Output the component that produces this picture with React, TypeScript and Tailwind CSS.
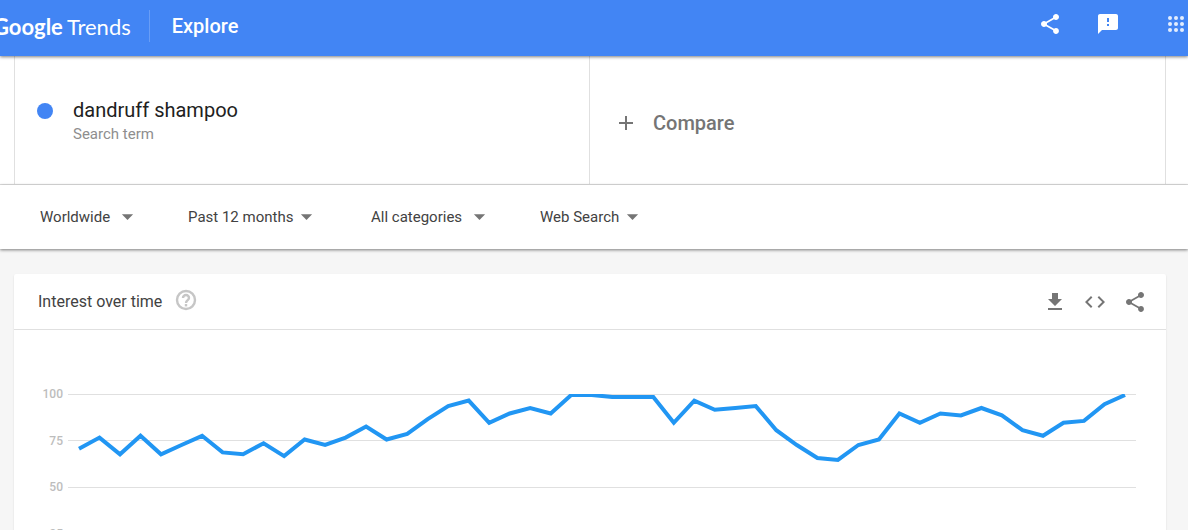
import { MdAdd, MdArrowDropDown, MdCode, MdFeedback, MdFileDownload, MdShare } from "react-icons/md";

const FILTERS = [
  { label: "Location", value: "Worldwide", slot: "w-[148px]", width: "w-[101px]" },
  { label: "Time range", value: "Past 12 months", slot: "w-[183px]", width: "w-[132px]" },
  { label: "Category", value: "All categories", slot: "w-[169px]", width: "w-[122px]" },
  { label: "Search type", value: "Web Search", slot: "w-[106px]", width: "w-[106px]" },
];

// weekly interest, 0-100
const INTEREST = [
  71, 77, 68, 78, 68, 73, 78, 69, 68, 74, 67, 76, 73, 77, 83, 76, 79, 87, 94, 97, 85, 90, 93, 90, 100, 100,
  99, 99, 99, 85, 97, 92, 93, 94, 81, 73, 66, 65, 73, 76, 90, 85, 90, 89, 93, 89, 81, 78, 85, 86, 95, 100,
];

const CHART_WIDTH = 1068;
const CHART_HEIGHT = 186;
const GRID_LINES = [0.5, 46.5, 93.5, 139.5, 185.5];

function AppsIcon() {
  return (
    <svg viewBox="0 0 24 24" width={24} height={24} fill="currentColor">
      {[6, 12, 18].map((y) => [6, 12, 18].map((x) => <circle key={`${x}-${y}`} cx={x} cy={y} r={2} />))}
    </svg>
  );
}

function HelpIcon() {
  return (
    <svg viewBox="0 0 24 24" width={24} height={24} fill="none" stroke="currentColor" strokeWidth={2.4}>
      <circle cx={12} cy={12} r={9} />
      <path d="M9 10a3 3 0 1 1 6 0c0 2-3 2.2-3 5" />
      <path d="M12 16v2.4" />
    </svg>
  );
}

function Header() {
  return (
    <header className="relative z-10 flex h-14 items-center bg-[#4285f4] pb-1 text-white shadow-[0_1px_3px_rgba(0,0,0,0.5)]">
      <a href="#" className="-ml-[7px] flex h-8 items-center gap-1 font-['Lato',sans-serif] text-[22px] whitespace-nowrap">
        <span className="font-bold">Google</span>
        <span className="font-normal">Trends</span>
      </a>
      <div className="ml-[18px] h-8 w-px bg-[#689df6]" />
      <h1 className="ml-[22px] text-xl font-medium">Explore</h1>
      <div className="mb-1 ml-auto flex items-center">
        <button aria-label="Share" className="mr-[34px]">
          <MdShare size={24} />
        </button>
        <button aria-label="Send feedback" className="mr-11">
          <MdFeedback size={24} />
        </button>
        <button aria-label="Google apps" className="text-white/85">
          <AppsIcon />
        </button>
      </div>
    </header>
  );
}

function Terms() {
  return (
    <section className="border-b border-[#e0e0e0] bg-white">
      <div className="mr-[22px] ml-[14px] grid h-32 grid-cols-2 border-x border-[#e0e0e0]">
        <div className="flex items-start border-r border-[#e0e0e0] pt-[42px] pl-[22px]">
          <span className="mt-[5px] size-4 rounded-full bg-[#4285f4]" />
          <div className="ml-5">
            <p className="text-xl leading-6 text-[#212121]">dandruff shampoo</p>
            <p className="text-[15px] leading-6 text-[#8e8e8e]">Search term</p>
          </div>
        </div>
        <button className="flex items-center gap-[15px] pt-[5px] pl-6 text-xl font-medium text-[#757575]">
          <MdAdd size={24} />
          Compare
        </button>
      </div>
    </section>
  );
}

function Filters() {
  return (
    <section className="relative flex h-16 items-center bg-white pl-10 shadow-[0_1px_3px_rgba(0,0,0,0.5)]">
      {FILTERS.map(({ label, value, slot, width }) => (
        <div key={label} className={slot}>
          <div className={`relative ${width}`}>
            <select aria-label={label} className="h-8 w-full appearance-none bg-transparent text-[15px] text-[#424242]">
              <option>{value}</option>
            </select>
            <MdArrowDropDown size={27} className="pointer-events-none absolute top-[2px] right-0 text-[#757575]" />
          </div>
        </div>
      ))}
    </section>
  );
}

function TimelineChart() {
  const points = INTEREST.map((v, i) => {
    const x = 11 + (i * 1046) / (INTEREST.length - 1);
    const y = 1 + (100 - v) * 1.853;
    return `${x.toFixed(1)},${y.toFixed(1)}`;
  }).join(" ");

  return (
    <div className="flex pt-14 pr-[30px] pb-10">
      <div className="flex w-[49px] flex-col justify-between text-right text-xs leading-4 font-medium text-[#bdbdbd]">
        {[100, 75, 50, 25, 0].map((n) => (
          <span key={n}>{n}</span>
        ))}
      </div>
      <div className="ml-[5px] flex-1 py-2">
        <svg
          viewBox={`0 0 ${CHART_WIDTH} ${CHART_HEIGHT}`}
          preserveAspectRatio="none"
          className="block h-[186px] w-full overflow-hidden"
          role="img"
          aria-label="Interest over time"
        >
          {GRID_LINES.map((y) => (
            <line key={y} x1={0} x2={CHART_WIDTH} y1={y} y2={y} stroke="#e0e0e0" />
          ))}
          <polyline points={points} fill="none" stroke="#2196f3" strokeWidth={4} vectorEffect="non-scaling-stroke" />
        </svg>
      </div>
    </div>
  );
}

export default function App() {
  return (
    <div className="h-screen overflow-hidden bg-[#f6f6f6] font-['Roboto',sans-serif]">
      <Header />
      <Terms />
      <Filters />
      <main className="mt-[25px] mr-[22px] ml-[14px] rounded-xs bg-white shadow-[0_1px_2px_rgba(0,0,0,0.12)]">
        <div className="flex h-14 items-center border-b border-[#e0e0e0] pr-[19px] pl-6 text-[#757575]">
          <h2 className="text-base text-[#424242]">Interest over time</h2>
          <button aria-label="Help" className="mb-[3px] ml-3 text-[#c6c6c6]">
            <HelpIcon />
          </button>
          <div className="ml-auto flex items-center gap-4">
            <button aria-label="Download CSV">
              <MdFileDownload size={24} />
            </button>
            <button aria-label="Embed">
              <MdCode size={24} />
            </button>
            <button aria-label="Share chart">
              <MdShare size={24} />
            </button>
          </div>
        </div>
        <TimelineChart />
      </main>
    </div>
  );
}
